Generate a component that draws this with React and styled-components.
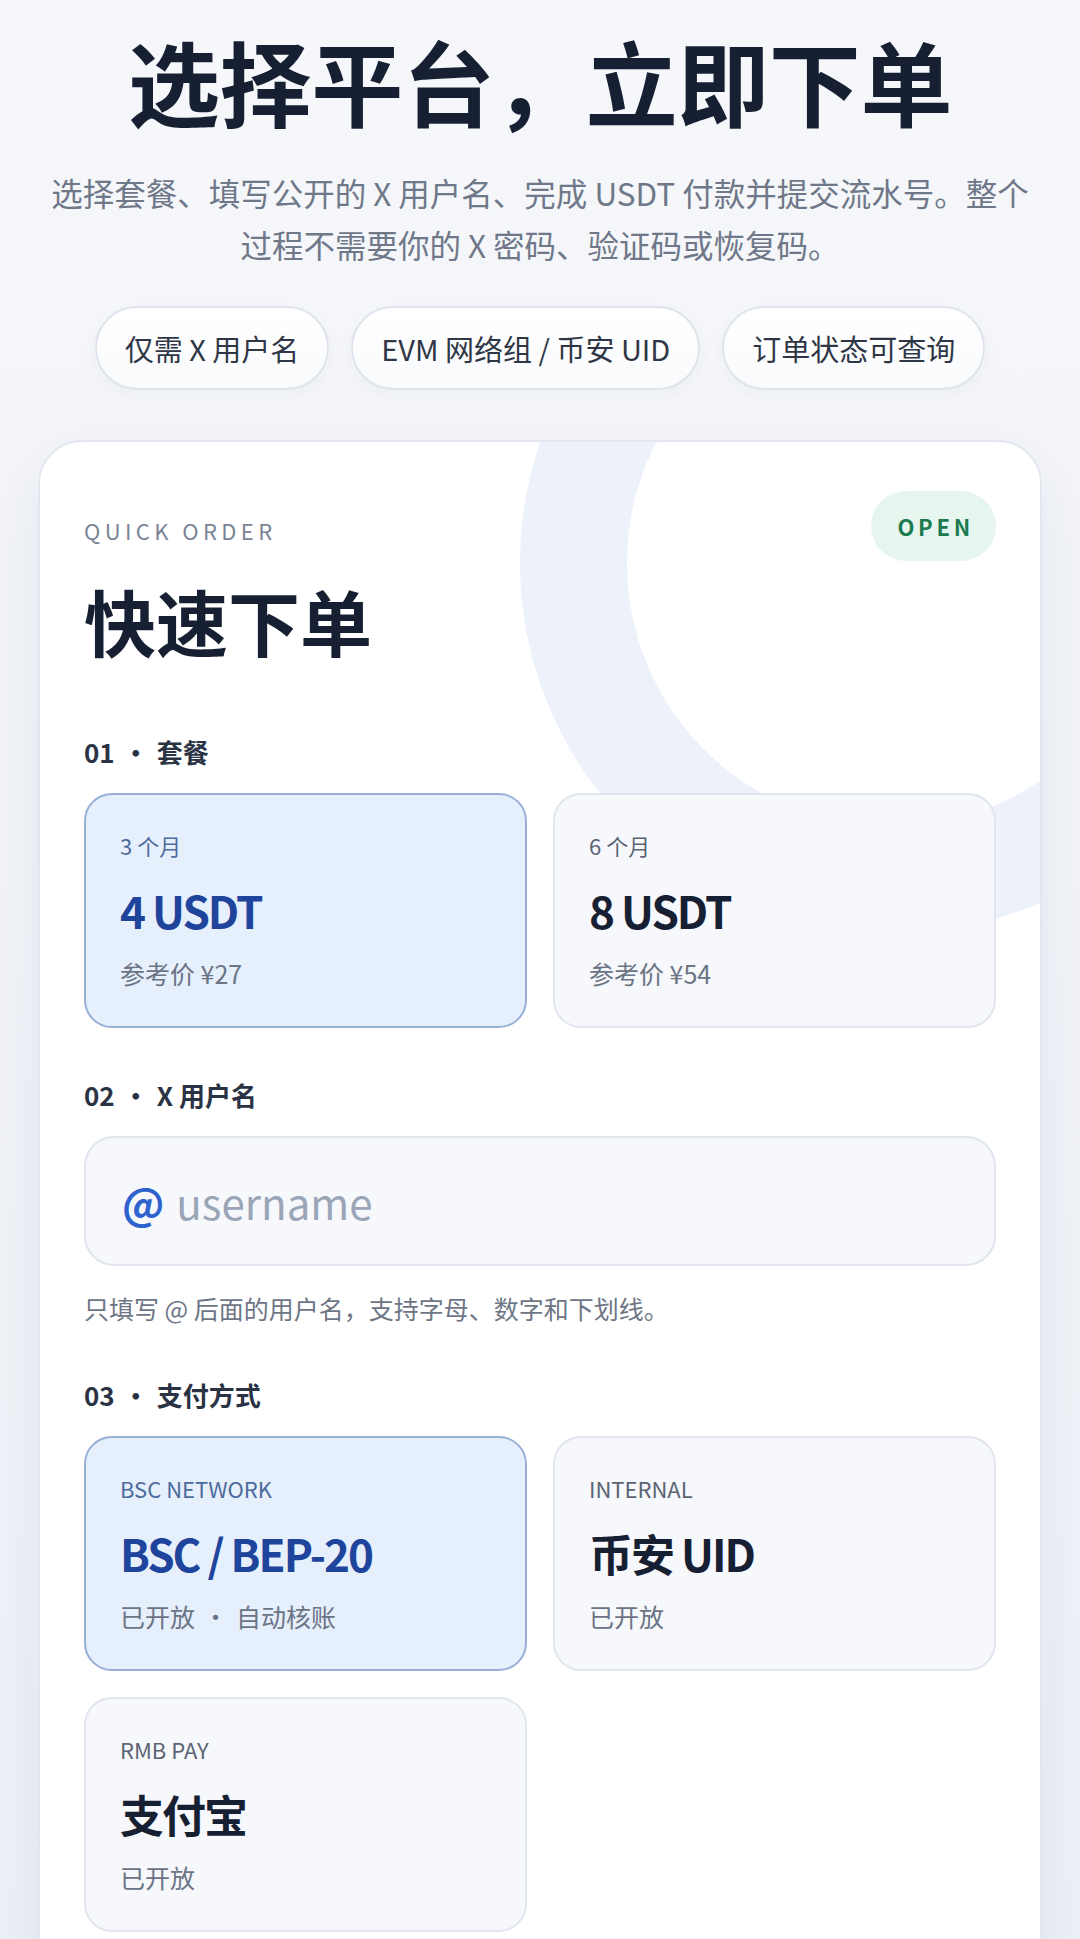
import React from "react"
import styled, { createGlobalStyle } from "styled-components"

const GlobalStyle = createGlobalStyle`
  * { box-sizing: border-box; }
  body {
    margin: 0;
    background: linear-gradient(180deg, #f6f7fa 0%, #eef1f7 100%);
    font-family: "Noto Sans CJK SC", "Noto Sans", sans-serif;
    color: #172033;
  }
`

const Page = styled.main`
  padding: 25px 38px 60px;
`

const Hero = styled.header`
  text-align: center;
`

const Title = styled.h1`
  margin: 0;
  font-size: 92px;
  line-height: 110px;
  font-weight: 700;
  letter-spacing: -0.005em;
  color: #172033;
`

const Lead = styled.p`
  margin: 31px auto 0;
  font-size: 31.5px;
  line-height: 52px;
  color: #6f7889;
`

const Chips = styled.div`
  display: flex;
  justify-content: center;
  gap: 22px;
  margin-top: 36px;
`

const Chip = styled.span`
  display: flex;
  align-items: center;
  height: 84px;
  padding: 0 28px;
  border: 2px solid #dfe4ec;
  border-radius: 999px;
  background: linear-gradient(180deg, #ffffff 0%, #f9fafc 100%);
  box-shadow: 0 6px 16px rgba(30, 50, 90, 0.04);
  font-size: 29px;
  color: #2f3747;
  white-space: nowrap;
`

const Card = styled.section`
  position: relative;
  overflow: hidden;
  margin-top: 50px;
  padding: 49px 44px 60px;
  background: #fff;
  border: 2px solid #e2e7ef;
  border-radius: 44px;
  box-shadow: 0 24px 70px rgba(28, 45, 90, 0.08);
`

const Ring = styled.div`
  position: absolute;
  left: 480px;
  top: -250px;
  width: 742px;
  height: 742px;
  border: 107px solid #edf1fa;
  border-radius: 50%;
`

const Content = styled.div`
  position: relative;
`

const Header = styled.div`
  display: flex;
  justify-content: space-between;
  align-items: flex-start;
`

const HeadLeft = styled.div`
  padding-top: 24px;
`

const Eyebrow = styled.div`
  font-size: 22px;
  line-height: 30px;
  letter-spacing: 0.2em;
  color: #7b8495;
`

const CardTitle = styled.h2`
  margin: 32px 0 0;
  font-size: 72px;
  line-height: 86px;
  font-weight: 700;
  color: #172033;
`

const Badge = styled.span`
  display: flex;
  align-items: center;
  height: 70px;
  padding: 0 22px 0 26px;
  border-radius: 999px;
  background: #e6f6ee;
  color: #1d7a50;
  font-size: 22px;
  font-weight: 700;
  letter-spacing: 0.17em;
`

const Section = styled.div`
  margin-top: ${p => p.$gap}px;
`

const StepLabel = styled.div`
  display: flex;
  align-items: center;
  margin-bottom: 24px;
  font-size: 26px;
  line-height: 34px;
  font-weight: 700;
  color: #2a3344;
`

const Dot = styled.span`
  margin: 0 ${p => p.$space || 8}px;
`

const Grid = styled.div`
  display: grid;
  grid-template-columns: 1fr 1fr;
  gap: 26px;
`

const Option = styled.div`
  padding: 35px 34px 37px;
  border: 2px solid ${p => (p.$active ? "#98b0d6" : "#e0e5ee")};
  border-radius: 28px;
  background: ${p => (p.$active ? "#e6effc" : "#f6f8fc")};
`

const OptLabel = styled.div`
  font-size: 22px;
  line-height: 30px;
  color: ${p => (p.$active ? "#4d6b9c" : "#5c6474")};
`

const OptTitle = styled.div`
  margin-top: 22px;
  font-size: 44px;
  line-height: 56px;
  font-weight: 700;
  letter-spacing: -0.045em;
  color: ${p => (p.$active ? "#1f449b" : "#172033")};
`

const OptSub = styled.div`
  margin-top: 19px;
  font-size: 25px;
  line-height: 32px;
  color: #6b7485;
`

const InputBox = styled.label`
  display: flex;
  align-items: center;
  gap: 10px;
  height: 130px;
  padding: 0 36px;
  border: 2px solid #e0e5ee;
  border-radius: 30px;
  background: #f6f8fc;
`

const At = styled.span`
  font-size: 42px;
  font-weight: 700;
  color: #2e62cf;
`

const Field = styled.input`
  flex: 1;
  min-width: 0;
  border: none;
  outline: none;
  background: transparent;
  font-family: inherit;
  font-size: 42px;
  color: #172033;
  &::placeholder {
    color: #9aa5b7;
  }
`

const Hint = styled.p`
  margin: 24px 0 0;
  font-size: 25px;
  line-height: 36px;
  color: #6e7686;
`

const plans = [
  { label: "3 个月", title: "4 USDT", sub: "参考价 ¥27", active: true },
  { label: "6 个月", title: "8 USDT", sub: "参考价 ¥54" },
]

const payments = [
  { label: "BSC NETWORK", title: "BSC / BEP-20", sub: ["已开放", "自动核账"], active: true },
  { label: "INTERNAL", title: "币安 UID", sub: ["已开放"] },
  { label: "RMB PAY", title: "支付宝", sub: ["已开放"] },
]

const Step = ({ num, text }) => (
  <StepLabel>
    <span>{num}</span>
    <Dot $space={8}>·</Dot>
    <span>{text}</span>
  </StepLabel>
)

const OptionCard = ({ item }) => (
  <Option $active={item.active}>
    <OptLabel $active={item.active}>{item.label}</OptLabel>
    <OptTitle $active={item.active}>{item.title}</OptTitle>
    <OptSub>
      {Array.isArray(item.sub)
        ? item.sub.map((s, i) => (
            <React.Fragment key={s}>
              {i > 0 && <Dot $space={8}>·</Dot>}
              {s}
            </React.Fragment>
          ))
        : item.sub}
    </OptSub>
  </Option>
)

export default function App() {
  return (
    <Page>
      <GlobalStyle />
      <Hero>
        <Title>选择平台，立即下单</Title>
        <Lead>
          选择套餐、填写公开的 X 用户名、完成 USDT 付款并提交流水号。整个
          <br />
          过程不需要你的 X 密码、验证码或恢复码。
        </Lead>
        <Chips>
          <Chip>仅需 X 用户名</Chip>
          <Chip>EVM 网络组 / 币安 UID</Chip>
          <Chip>订单状态可查询</Chip>
        </Chips>
      </Hero>

      <Card>
        <Ring />
        <Content>
          <Header>
            <HeadLeft>
              <Eyebrow>QUICK ORDER</Eyebrow>
              <CardTitle>快速下单</CardTitle>
            </HeadLeft>
            <Badge>OPEN</Badge>
          </Header>

          <Section $gap={72}>
            <Step num="01" text="套餐" />
            <Grid>
              {plans.map(p => (
                <OptionCard key={p.title} item={p} />
              ))}
            </Grid>
          </Section>

          <Section $gap={50}>
            <Step num="02" text="X 用户名" />
            <InputBox>
              <At>@</At>
              <Field placeholder="username" />
            </InputBox>
            <Hint>只填写 @ 后面的用户名，支持字母、数字和下划线。</Hint>
          </Section>

          <Section $gap={52}>
            <Step num="03" text="支付方式" />
            <Grid>
              {payments.map(p => (
                <OptionCard key={p.title} item={p} />
              ))}
            </Grid>
          </Section>
        </Content>
      </Card>
    </Page>
  )
}
